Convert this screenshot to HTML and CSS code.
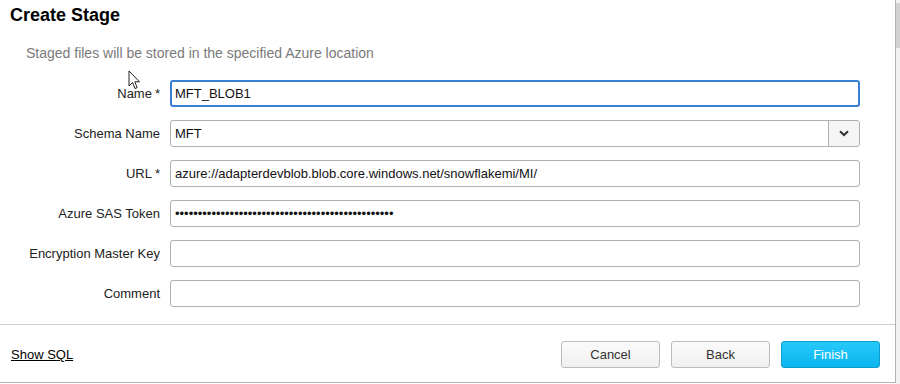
FILE: index.html
```html
<!DOCTYPE html>
<html lang="en">
<head>
  <meta charset="UTF-8" />
  <title>Create Stage</title>
  <link rel="stylesheet" href="styles.css">
</head>
<body>
  <div class="dialog">
    <h1 class="title">Create Stage</h1>
    <p class="subtitle">Staged files will be stored in the specified Azure location</p>

    <form class="form">
      <div class="row">
        <label class="label">Name<span class="req">*</span></label>
        <input class="field focused" type="text" value="MFT_BLOB1">
      </div>
      <div class="row">
        <label class="label">Schema Name</label>
        <div class="field select">
          <span class="select-value">MFT</span>
          <span class="select-btn">
            <svg width="10" height="7" viewBox="0 0 10 7"><path d="M1 1.2 L5 5 L9 1.2" fill="none" stroke="#333" stroke-width="2"/></svg>
          </span>
        </div>
      </div>
      <div class="row">
        <label class="label">URL<span class="req">*</span></label>
        <input class="field" type="text" value="azure://adapterdevblob.blob.core.windows.net/snowflakemi/MI/">
      </div>
      <div class="row">
        <label class="label">Azure SAS Token</label>
        <input class="field" type="password" value="abcdefghijklmnopqrstuvwxyzabcdefghijklmnopqrstuv">
      </div>
      <div class="row">
        <label class="label">Encryption Master Key</label>
        <input class="field" type="text" value="">
      </div>
      <div class="row">
        <label class="label">Comment</label>
        <input class="field" type="text" value="">
      </div>
    </form>

    <div class="footer">
      <a href="#" class="show-sql">Show SQL</a>
      <div class="buttons">
        <button class="btn">Cancel</button>
        <button class="btn">Back</button>
        <button class="btn primary">Finish</button>
      </div>
    </div>

    <!-- mouse pointer from the capture -->
    <svg class="cursor" width="13" height="20" viewBox="0 0 13 20">
      <path d="M1 1 L1 16 L4.5 12.5 L7 18.5 L9.2 17.6 L6.8 11.8 L11.5 11.8 Z" fill="#fff" stroke="#222" stroke-width="1"/>
    </svg>
  </div>
  <div class="scroll"><div class="thumb"></div></div>
</body>
</html>
```

FILE: styles.css
```css
body, html {
  margin: 0;
  padding: 0;
  background: #fff;
  font-family: "Liberation Sans", Arial, sans-serif;
  color: #222;
}

body {
  display: flex;
  height: 384px;
  overflow: hidden;
}

.dialog {
  position: relative;
  width: 896px;
  box-sizing: border-box;
  border-right: 1px solid #b4b4b4;
  border-bottom: 1px solid #b4b4b4;
  align-self: flex-start;
}

.scroll {
  flex: 1;
  background: #f2f2f2;
}

.thumb {
  margin-top: 3px;
  height: 45px;
  background: #d2d2d2;
}

/* Header */
.title {
  margin: 0;
  padding: 5px 10px 0;
  font-size: 18px;
  line-height: 20px;
  font-weight: bold;
  color: #000;
}

.subtitle {
  margin: 20px 0 0;
  padding-left: 26px;
  font-size: 14px;
  line-height: 16px;
  color: #7a7a7a;
}

/* Form */
.form {
  display: flex;
  flex-direction: column;
  gap: 13px;
  padding: 19px 35px 17px 0;
  margin: 0;
}

.row {
  display: flex;
  align-items: center;
  gap: 10px;
}

.label {
  width: 160px;
  text-align: right;
  font-size: 13px;
  color: #222;
}

.req {
  margin-left: 3px;
}

.field {
  flex: 1;
  height: 27px;
  box-sizing: border-box;
  border: 1px solid #b0b0b0;
  border-radius: 3px;
  padding: 0 4px;
  font-family: "Liberation Sans", Arial, sans-serif;
  font-size: 13px;
  color: #111;
  background: #fff;
  outline: none;
}

.field.focused {
  border: 2px solid #3a7fd6;
  padding: 0 3px;
}

.select {
  display: flex;
  align-items: center;
  padding: 0 0 0 4px;
}

.select-value {
  flex: 1;
}

.select-btn {
  width: 30px;
  height: 100%;
  display: flex;
  align-items: center;
  justify-content: center;
  border-left: 1px solid #b0b0b0;
  background: #f5f5f5;
  border-radius: 0 3px 3px 0;
}

/* Footer */
.footer {
  display: flex;
  justify-content: space-between;
  align-items: center;
  border-top: 1px solid #cfcfcf;
  padding: 16px 15px 14px 11px;
}

.show-sql {
  font-size: 13px;
  color: #000;
  text-decoration: underline;
}

.buttons {
  display: flex;
  gap: 11px;
}

.btn {
  width: 99px;
  height: 27px;
  border: 1px solid #bcbcbc;
  border-radius: 3px;
  background: linear-gradient(180deg, #fbfbfb, #efefef);
  font-family: "Liberation Sans", Arial, sans-serif;
  font-size: 13px;
  color: #333;
  cursor: pointer;
}

.btn.primary {
  border-color: #0d9dcf;
  background: linear-gradient(180deg, #27c9fb, #0bb5ee);
  color: #fff;
}

.cursor {
  position: absolute;
  left: 128px;
  top: 70px;
}
```
